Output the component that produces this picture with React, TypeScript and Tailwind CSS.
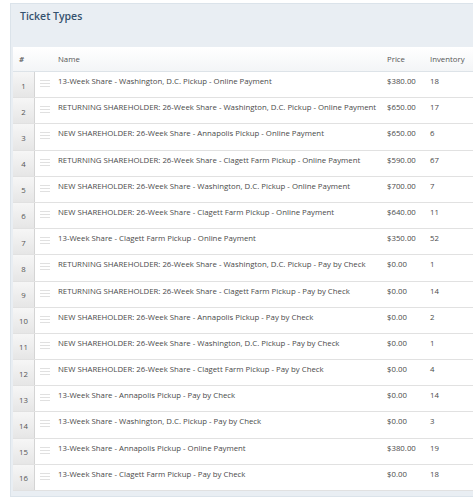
const tickets: [string, string, number][] = [
  ['13-Week Share - Washington, D.C. Pickup - Online Payment', '$380.00', 18],
  ['RETURNING SHAREHOLDER: 26-Week Share - Washington, D.C. Pickup - Online Payment', '$650.00', 17],
  ['NEW SHAREHOLDER: 26-Week Share - Annapolis Pickup - Online Payment', '$650.00', 6],
  ['RETURNING SHAREHOLDER: 26-Week Share - Clagett Farm Pickup - Online Payment', '$590.00', 67],
  ['NEW SHAREHOLDER: 26-Week Share - Washington, D.C. Pickup - Online Payment', '$700.00', 7],
  ['NEW SHAREHOLDER: 26-Week Share - Clagett Farm Pickup - Online Payment', '$640.00', 11],
  ['13-Week Share - Clagett Farm Pickup - Online Payment', '$350.00', 52],
  ['RETURNING SHAREHOLDER: 26-Week Share - Washington, D.C. Pickup - Pay by Check', '$0.00', 1],
  ['RETURNING SHAREHOLDER: 26-Week Share - Clagett Farm Pickup - Pay by Check', '$0.00', 14],
  ['NEW SHAREHOLDER: 26-Week Share - Annapolis Pickup - Pay by Check', '$0.00', 2],
  ['NEW SHAREHOLDER: 26-Week Share - Washington, D.C. Pickup - Pay by Check', '$0.00', 1],
  ['NEW SHAREHOLDER: 26-Week Share - Clagett Farm Pickup - Pay by Check', '$0.00', 4],
  ['13-Week Share - Annapolis Pickup - Pay by Check', '$0.00', 14],
  ['13-Week Share - Washington, D.C. Pickup - Pay by Check', '$0.00', 3],
  ['13-Week Share - Annapolis Pickup - Online Payment', '$380.00', 19],
  ['13-Week Share - Clagett Farm Pickup - Pay by Check', '$0.00', 18],
]

function DragHandle() {
  return (
    <div className="flex flex-col gap-[2px] w-[10px] pt-[8px]">
      <div className="h-px bg-[#e0e0e0]" />
      <div className="h-px bg-[#e0e0e0]" />
      <div className="h-px bg-[#e0e0e0]" />
    </div>
  )
}

export default function App() {
  return (
    <div className="min-h-[500px] bg-white pt-[3px] pl-[10px] font-['Open_Sans',sans-serif] text-[#4a4a4a] overflow-hidden">
      <div className="w-[480px] bg-[#e9eef3] border border-[#dbe3ea] pb-[5px]">
        {/* Header */}
        <div className="h-[43px] px-[9px] pt-[5px]">
          <h2 className="text-[10.5px] font-semibold text-[#35526e]">Ticket Types</h2>
        </div>

        {/* Table */}
        <div className="ml-[2px] bg-white text-[7.8px]">
          <div className="flex h-[25px] items-center pt-[2px] border-b border-[#dde3e8] bg-gradient-to-b from-white to-[#f3f5f7] text-[#555]">
            <div className="w-[22px] pl-[6px] font-bold italic text-[#666]">#</div>
            <div className="w-[23px]" />
            <div className="w-[329px]">Name</div>
            <div className="w-[43px]">Price</div>
            <div>Inventory</div>
          </div>
          {tickets.map(([name, price, inv], i) => (
            <div key={i} className="flex h-[26.2px] border-b border-[#e1e1e1]">
              <div className="w-[22px] flex items-end justify-center pb-[5px] bg-gradient-to-b from-[#f6f6f6] to-[#e6e6e6] border-r border-[#d4d4d4] text-[#555]">
                {i + 1}
              </div>
              <div className="w-[23px] pl-[5px]">
                <DragHandle />
              </div>
              <div className="w-[329px] pt-[4px]">{name}</div>
              <div className="w-[43px] pt-[4px]">{price}</div>
              <div className="pt-[4px]">{inv}</div>
            </div>
          ))}
        </div>
      </div>
    </div>
  )
}
